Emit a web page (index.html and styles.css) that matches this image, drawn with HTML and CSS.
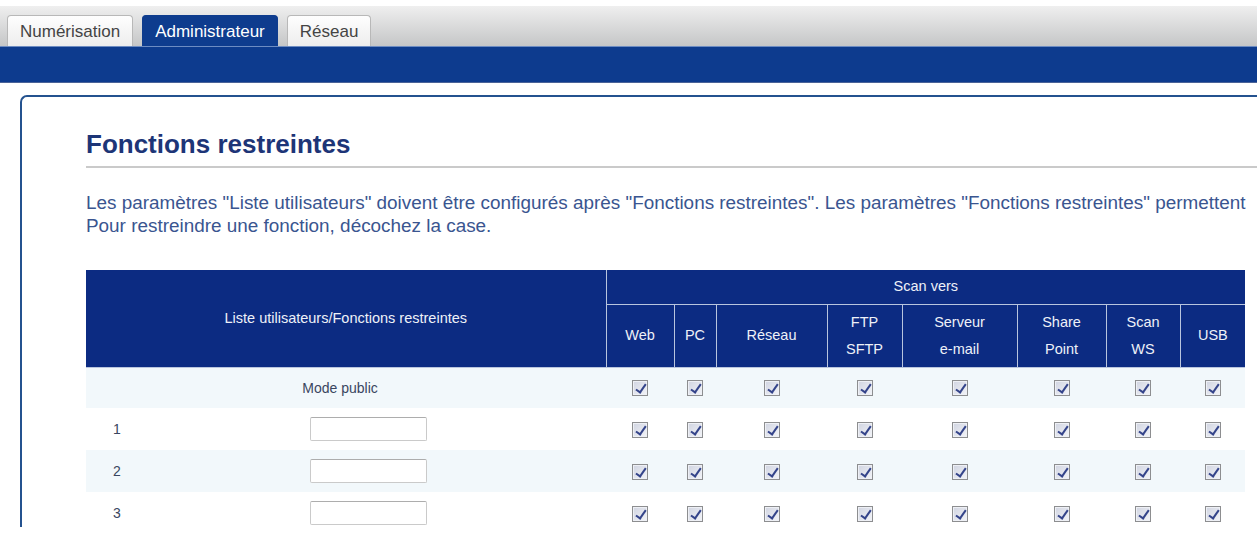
FILE: index.html
```html
<!DOCTYPE html>
<html lang="fr">
<head>
  <meta charset="UTF-8">
  <meta name="viewport" content="width=device-width, initial-scale=1.0">
  <title>Fonctions restreintes</title>
  <link rel="stylesheet" href="styles.css">
</head>
<body>
  <div class="onglets">
    <a class="onglet">Numérisation</a>
    <a class="onglet actif">Administrateur</a>
    <a class="onglet">Réseau</a>
  </div>
  <div class="bandeau"></div>

  <div class="panneau">
    <h1>Fonctions restreintes</h1>
    <p class="info">Les paramètres "Liste utilisateurs" doivent être configurés après "Fonctions restreintes". Les paramètres "Fonctions restreintes" permettent<br>Pour restreindre une fonction, décochez la case.</p>

    <table class="fonctions">
      <colgroup>
        <col class="c-num"><col class="c-nom">
        <col class="c-web"><col class="c-pc"><col class="c-reseau"><col class="c-ftp">
        <col class="c-mail"><col class="c-share"><col class="c-ws"><col class="c-usb">
      </colgroup>
      <thead>
        <tr class="ligne-haut">
          <th colspan="2" rowspan="2">Liste utilisateurs/Fonctions restreintes</th>
          <th colspan="8">Scan vers</th>
        </tr>
        <tr class="ligne-bas">
          <th>Web</th>
          <th>PC</th>
          <th>Réseau</th>
          <th>FTP<br>SFTP</th>
          <th>Serveur<br>e-mail</th>
          <th>Share<br>Point</th>
          <th>Scan<br>WS</th>
          <th>USB</th>
        </tr>
      </thead>
      <tbody id="utilisateurs"></tbody>
    </table>
  </div>

  <script>
    function cases() {
      let html = "";
      for (let j = 0; j < 8; j++) {
        html += '<td class="case"><span class="coche"></span></td>';
      }
      return html;
    }

    const corps = document.getElementById("utilisateurs");
    corps.innerHTML = `<tr class="alt public"><td colspan="2" class="mode">Mode public</td>${cases()}</tr>`;
    for (let i = 1; i <= 3; i++) {
      corps.innerHTML += `
        <tr class="${i % 2 == 0 ? "alt" : ""}">
          <td class="num">${i}</td>
          <td class="nom"><input type="text"></td>
          ${cases()}
        </tr>`;
    }
  </script>
</body>
</html>
```

FILE: styles.css
```css
* {
  box-sizing: border-box;
}
body {
  margin: 0;
  font-family: "Liberation Sans", Arial, sans-serif;
  background-color: #fff;
  overflow: hidden;
}
.onglets {
  margin-top: 6px;
  height: 40px;
  padding-left: 7px;
  display: flex;
  align-items: flex-end;
  gap: 9px;
  background: linear-gradient(#efefef, #c5c6c7);
}
.onglet {
  height: 31px;
  padding: 0 12px;
  line-height: 31px;
  font-size: 17px;
  color: #444;
  background: linear-gradient(#fefefe, #ededed);
  border: 1px solid #b8b8b8;
  border-bottom: none;
  border-radius: 4px 4px 0 0;
}
.onglet.actif {
  color: #fff;
  background-color: #0e3c8e;
  background-image: none;
  border-color: #0e3c8e;
}
.bandeau {
  height: 37px;
  background-color: #0d3b8e;
  border-top: 1px solid #6d8cc2;
  border-bottom: 1px solid #4a6398;
}
.panneau {
  margin: 12px 0 0 20px;
  height: 432px;
  padding-left: 64px;
  border-top: 2px solid #24528f;
  border-left: 2px solid #24528f;
  border-top-left-radius: 7px;
  overflow: hidden;
}
h1 {
  margin: 32px 0 0;
  padding-bottom: 7px;
  font-size: 26px;
  line-height: 30px;
  color: #1d3577;
  border-bottom: 2px solid #cacaca;
}
.info {
  margin: 23px 0 33px;
  font-size: 18.9px;
  line-height: 23px;
  color: #3a5590;
  white-space: nowrap;
}
.fonctions {
  width: 1159px;
  table-layout: fixed;
  border-collapse: collapse;
  border-style: hidden;
}
.c-num { width: 44px; }
.c-nom { width: 476px; }
.c-web { width: 68px; }
.c-pc { width: 42px; }
.c-reseau { width: 111px; }
.c-ftp { width: 75px; }
.c-mail { width: 115px; }
.c-share { width: 89px; }
.c-ws { width: 74px; }
.c-usb { width: 65px; }
.fonctions th {
  padding: 0;
  font-size: 14.5px;
  font-weight: normal;
  line-height: 27px;
  color: #eef1f8;
  background-color: #0c2b82;
  border: 1px solid #b9c5de;
}
.ligne-haut {
  height: 34px;
}
.ligne-bas {
  height: 63px;
}
.fonctions td {
  padding: 0;
  height: 42px;
  font-size: 14px;
  color: #3a4660;
  vertical-align: middle;
}
.fonctions tr.public td {
  height: 41px;
}
.fonctions tr.alt {
  background-color: #f2f8fb;
}
.mode {
  text-align: center;
  padding-right: 12px !important;
}
.num {
  padding-left: 27px !important;
}
.nom {
  text-align: center;
}
.nom input {
  width: 117px;
  height: 24px;
  vertical-align: middle;
  border: 1px solid #cacaca;
  border-top-color: #adadad;
  border-radius: 2px;
  background-color: #fff;
}
.case {
  text-align: center;
}
.coche {
  display: inline-block;
  position: relative;
  width: 16px;
  height: 16px;
  vertical-align: middle;
  border: 1px solid #8d8e90;
  background: linear-gradient(135deg, #d0d4e1, #f3f4f8);
  box-shadow: inset 0 0 0 1px #eef0f5;
}
.coche::after {
  content: "";
  position: absolute;
  left: 5px;
  top: 1px;
  width: 4px;
  height: 9px;
  border: solid #34448a;
  border-width: 0 2px 2px 0;
  transform: rotate(35deg);
}
```
